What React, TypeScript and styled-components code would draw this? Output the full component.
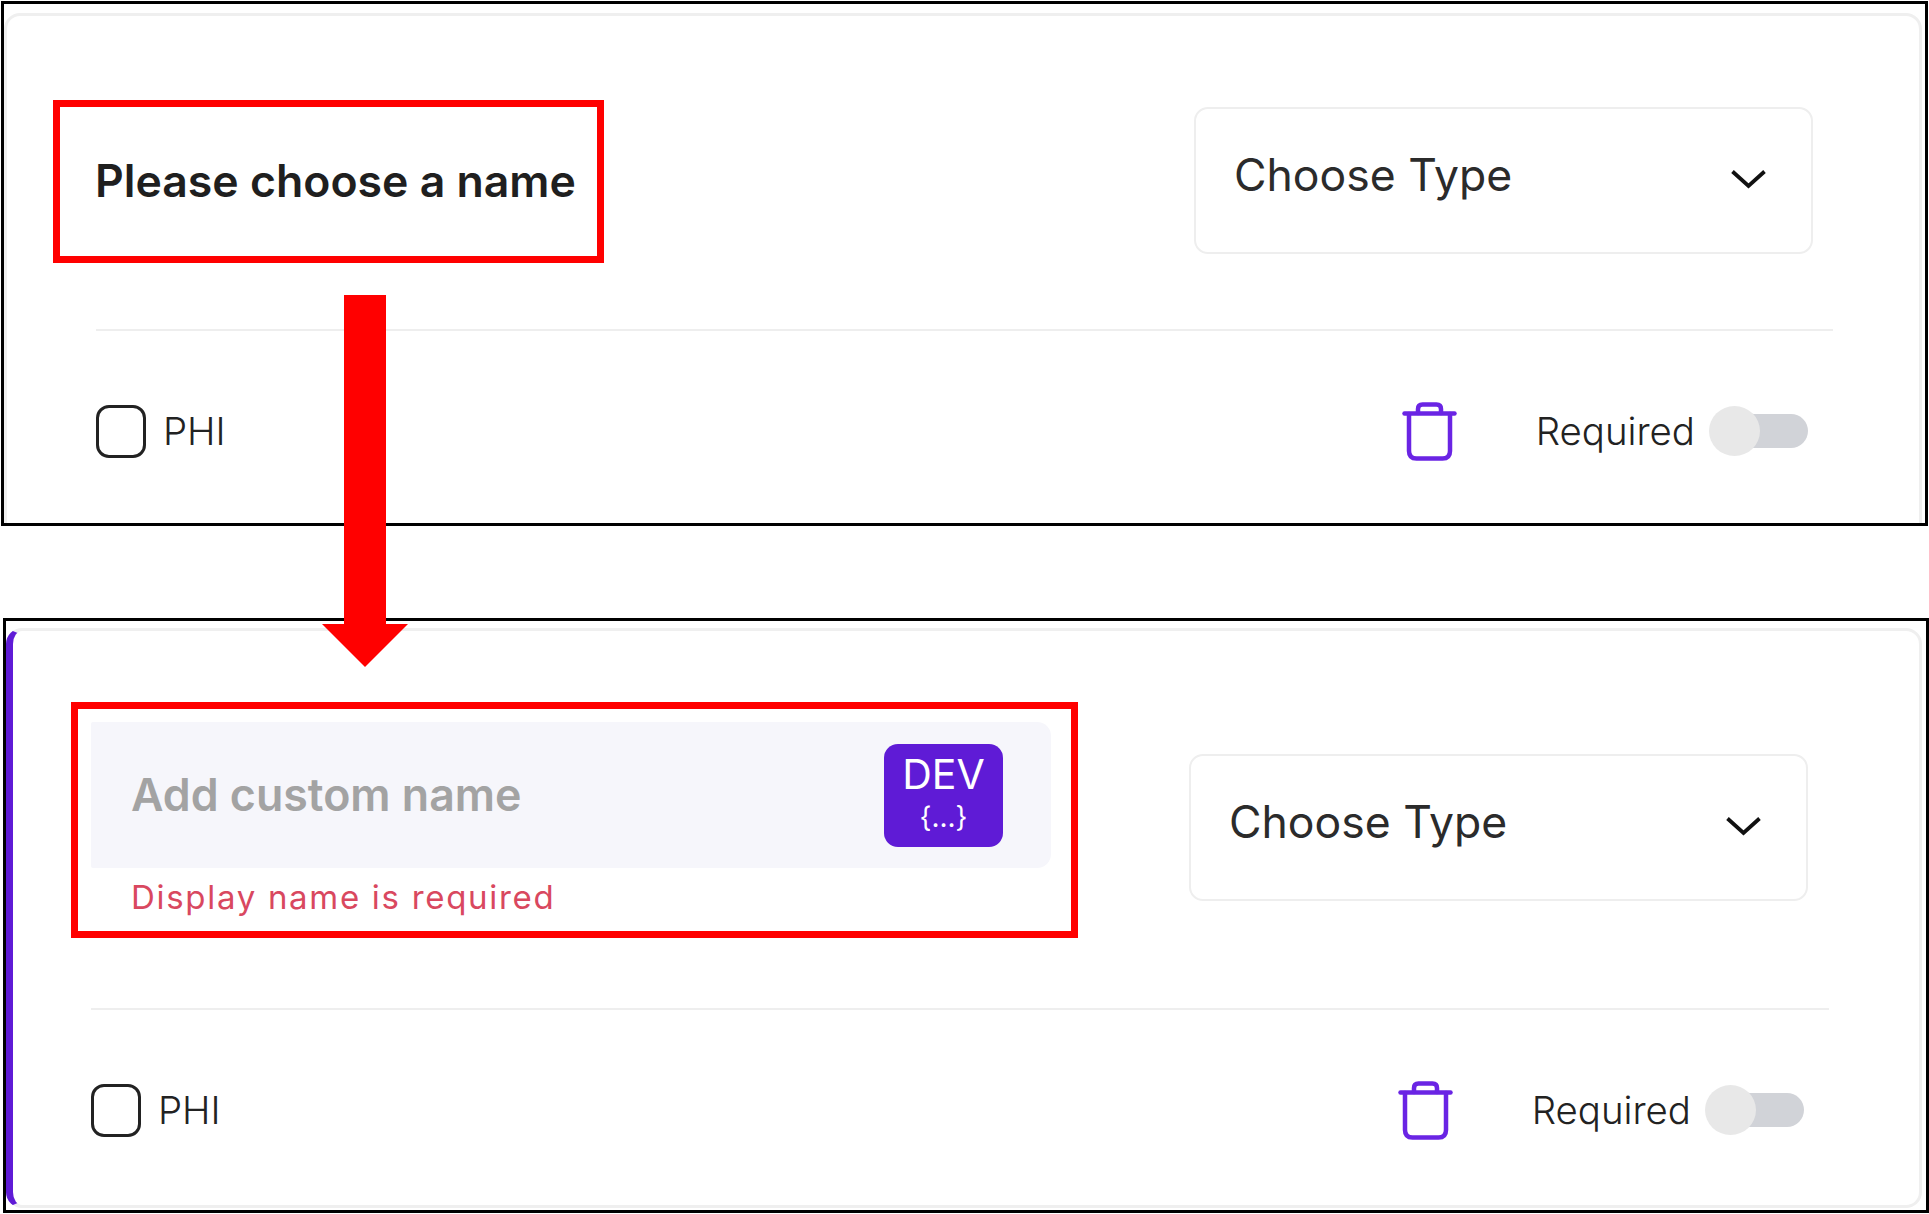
import React from "react";
import styled, { createGlobalStyle } from "styled-components";

const Global = createGlobalStyle`
  html, body { margin: 0; padding: 0; background: #fff; }
  body { font-family: Inter, "Liberation Sans", sans-serif; color: #222; }
`;

const Page = styled.div`
  position: relative;
  width: 1929px;
  height: 1214px;
  overflow: hidden;
  background: #fff;
`;

const Frame = styled.section<{ $left: number; $top: number; $width: number; $height: number; $inset: number }>`
  box-sizing: border-box;
  width: ${(p) => p.$width}px;
  height: ${(p) => p.$height}px;
  margin-left: ${(p) => p.$left}px;
  margin-top: ${(p) => p.$top}px;
  padding-top: ${(p) => p.$inset}px;
  border: 3px solid #000;
  overflow: hidden;
`;

const Card = styled.div<{ $accent?: boolean; $width: number; $height: number; $pl: number; $pt: number }>`
  box-sizing: border-box;
  width: ${(p) => p.$width}px;
  height: ${(p) => p.$height}px;
  padding: ${(p) => p.$pt}px 0 0 ${(p) => p.$pl}px;
  background: #fff;
  border: 3px solid #efefef;
  border-left: ${(p) => (p.$accent ? "7px solid #5f1bd6" : "3px solid #efefef")};
  border-radius: 16px;
`;

const Body = styled.div<{ $width: number }>`
  width: ${(p) => p.$width}px;
`;

const TopRow = styled.div<{ $align: string }>`
  display: flex;
  justify-content: space-between;
  align-items: ${(p) => p.$align};
`;

const NameCell = styled.div<{ $width?: number }>`
  position: relative;
  width: ${(p) => (p.$width ? `${p.$width}px` : "auto")};
`;

const Highlight = styled.div<{ $t: number; $r: number; $b: number; $l: number }>`
  position: absolute;
  top: ${(p) => p.$t}px;
  right: ${(p) => p.$r}px;
  bottom: ${(p) => p.$b}px;
  left: ${(p) => p.$l}px;
  border: 7px solid #f00;
  pointer-events: none;
`;

const Title = styled.div`
  margin-left: -1px;
  font-size: 44.6px;
  line-height: 50px;
  font-weight: 600;
  color: #1f1f1f;
  white-space: nowrap;
`;

const NameInput = styled.div`
  box-sizing: border-box;
  display: flex;
  align-items: center;
  justify-content: space-between;
  height: 146px;
  padding: 0 48px 0 40px;
  background: #f6f6fb;
  border-radius: 2px 14px 14px 2px;
`;

const Placeholder = styled.span`
  font-size: 44.7px;
  font-weight: 600;
  color: #a3a3a3;
  white-space: nowrap;
`;

const DevBadge = styled.div`
  box-sizing: border-box;
  display: flex;
  flex-direction: column;
  align-items: center;
  width: 119px;
  height: 103px;
  padding-top: 8px;
  border-radius: 14px;
  background: #5f1bd6;
  color: #fff;
`;

const DevLabel = styled.span`
  font-size: 41px;
  line-height: 44px;
  font-weight: 400;
`;

const DevCode = styled.span`
  font-size: 28px;
  line-height: 42px;
  font-weight: 400;
`;

const ErrorText = styled.div`
  margin: 11px 0 0 40px;
  font-size: 33px;
  line-height: 36px;
  letter-spacing: 1.7px;
  color: #d9485f;
  white-space: nowrap;
`;

const TypeSelect = styled.div<{ $mt: number; $mr: number }>`
  box-sizing: border-box;
  display: flex;
  align-items: center;
  justify-content: space-between;
  width: 619px;
  height: 147px;
  margin-top: ${(p) => p.$mt}px;
  margin-right: ${(p) => p.$mr}px;
  padding: 0 44px 11px 38px;
  background: #fff;
  border: 2px solid #eeeeee;
  border-radius: 14px;
  font-size: 44.5px;
  color: #2b2b2b;
`;

const Chevron = styled.svg`
  width: 37px;
  height: 20px;
  margin-top: 7px;
  flex: none;
`;

const Divider = styled.div<{ $mt: number }>`
  height: 2px;
  margin-top: ${(p) => p.$mt}px;
  background: #eeeeee;
`;

const BottomRow = styled.div`
  display: flex;
  align-items: center;
  justify-content: space-between;
  height: 60px;
  margin-top: 70px;
  padding-right: 25px;
`;

const Group = styled.div`
  display: flex;
  align-items: center;
`;

const CheckBox = styled.div`
  box-sizing: border-box;
  width: 50px;
  height: 53px;
  margin-right: 17px;
  border: 3px solid #222;
  border-radius: 13px;
`;

const FieldLabel = styled.span`
  font-size: 38.4px;
  font-weight: 300;
  color: #222;
  white-space: nowrap;
`;

const TrashIcon = styled.svg`
  width: 55px;
  height: 59px;
  margin-right: 79px;
  flex: none;
`;

const Toggle = styled.div`
  position: relative;
  width: 99px;
  height: 50px;
  margin-left: 14px;
  display: flex;
  align-items: center;
`;

const Track = styled.div`
  width: 88px;
  height: 34px;
  margin-left: 11px;
  border-radius: 17px;
  background: #d1d3d8;
`;

const Thumb = styled.div`
  position: absolute;
  left: 0;
  top: 0;
  width: 51px;
  height: 50px;
  border-radius: 50%;
  background: #e8e8e8;
`;

const ArrowMark = styled.svg`
  position: absolute;
  left: 322px;
  top: 295px;
  width: 86px;
  height: 372px;
`;

const ChevronGlyph = () => (
  <Chevron viewBox="0 0 37 20" fill="none">
    <path d="M2.5 2.5 L18.5 17 L34.5 2.5" stroke="#111" strokeWidth="3.8" />
  </Chevron>
);

const Trash = () => (
  <TrashIcon viewBox="0 0 55 59" fill="none" stroke="#6a24e4" strokeWidth="4.5" strokeLinecap="round" strokeLinejoin="round">
    <path d="M2.5 11.5 H52.5" />
    <path d="M16 11 V7 Q16 2.5 20.5 2.5 H34.5 Q39 2.5 39 7 V11" />
    <path d="M7 12 V49 Q7 56.5 14.5 56.5 H40.5 Q48 56.5 48 49 V12" />
  </TrashIcon>
);

const Footer = () => (
  <BottomRow>
    <Group>
      <CheckBox />
      <FieldLabel>PHI</FieldLabel>
    </Group>
    <Group>
      <Trash />
      <FieldLabel>Required</FieldLabel>
      <Toggle>
        <Track />
        <Thumb />
      </Toggle>
    </Group>
  </BottomRow>
);

export default function App() {
  return (
    <Page>
      <Global />
      <Frame $left={1} $top={1} $width={1927} $height={525} $inset={9}>
        <Card $width={1918} $height={560} $pl={89} $pt={91}>
          <Body $width={1737}>
            <TopRow $align="center">
              <NameCell>
                <Title>Please choose a name</Title>
                <Highlight $t={-56} $r={-28} $b={-57} $l={-43} />
              </NameCell>
              <TypeSelect $mt={0} $mr={20}>
                Choose Type
                <ChevronGlyph />
              </TypeSelect>
            </TopRow>
            <Divider $mt={75} />
            <Footer />
          </Body>
        </Card>
      </Frame>
      <Frame $left={3} $top={92} $width={1926} $height={595} $inset={7}>
        <Card $accent $width={1916} $height={580} $pl={78} $pt={91}>
          <Body $width={1738}>
            <TopRow $align="flex-start">
              <NameCell $width={960}>
                <NameInput>
                  <Placeholder>Add custom name</Placeholder>
                  <DevBadge>
                    <DevLabel>DEV</DevLabel>
                    <DevCode>{"{...}"}</DevCode>
                  </DevBadge>
                </NameInput>
                <ErrorText>Display name is required</ErrorText>
                <Highlight $t={-20} $r={-27} $b={-23} $l={-20} />
              </NameCell>
              <TypeSelect $mt={32} $mr={21}>
                Choose Type
                <ChevronGlyph />
              </TypeSelect>
            </TopRow>
            <Divider $mt={93} />
            <Footer />
          </Body>
        </Card>
      </Frame>
      <ArrowMark viewBox="0 0 86 372">
        <polygon points="22,0 64,0 64,329 86,329 43,372 0,329 22,329" fill="#f00" />
      </ArrowMark>
    </Page>
  );
}
